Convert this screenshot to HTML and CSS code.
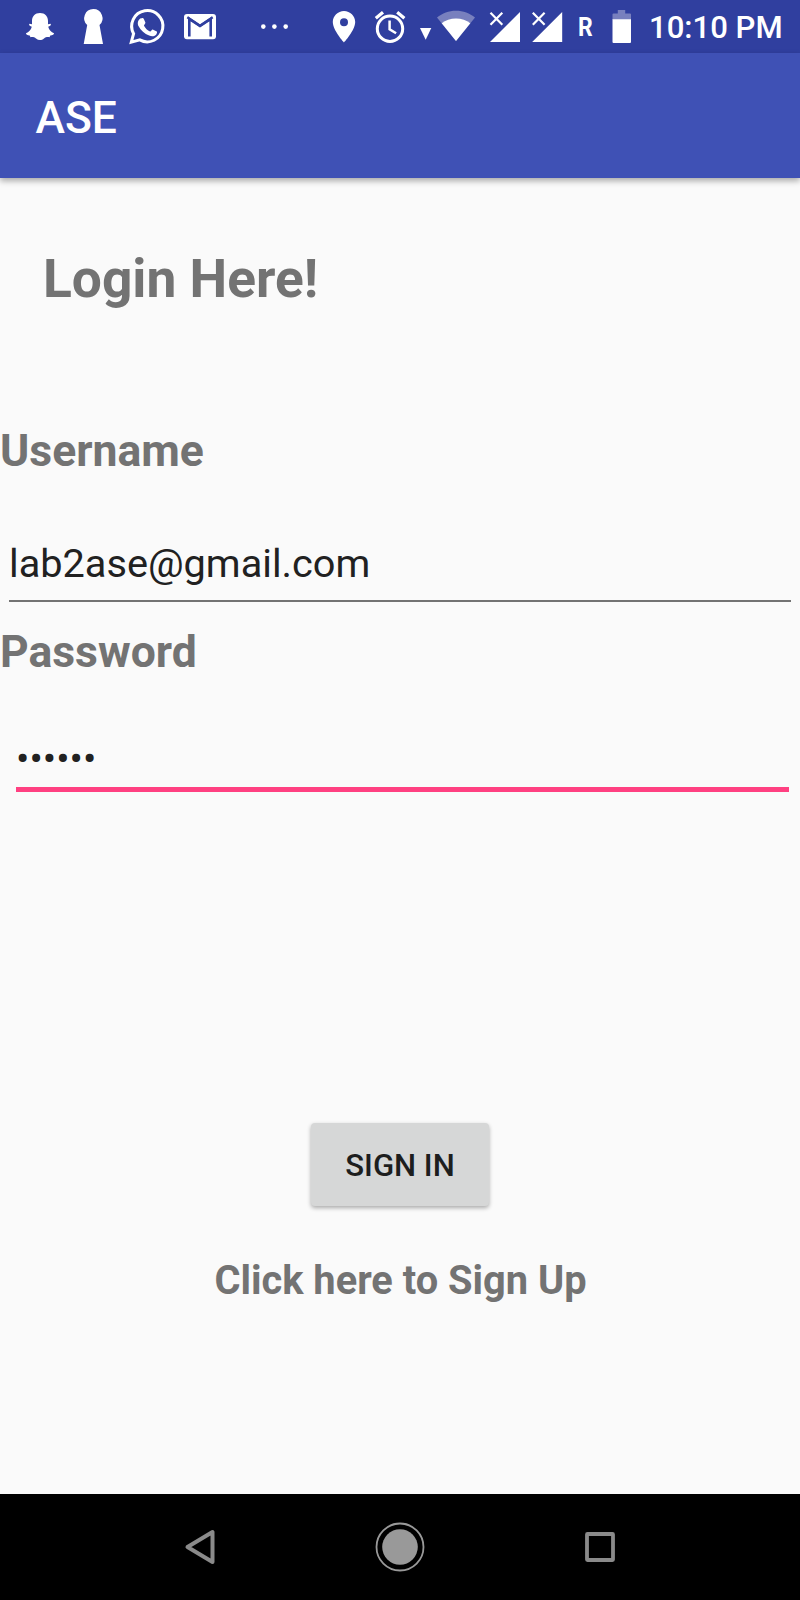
FILE: index.html
```
<!DOCTYPE html>
<html lang="en">
<head>
<meta charset="utf-8">
<title>ASE</title>
<link rel="stylesheet" href="styles.css">
</head>
<body>
<div class="screen">
  <div class="status">
    <svg width="50" height="53" viewBox="20 0 50 53"><path fill="#fff" d="M40 13c5 0 8 3.500 8 8v3.300l2.500-.6c1 .8.3 2-2.300 3 .8 3 3 5.500 5.800 6.500.3 1.300-1.500 2-3.700 2.300l-.8 1.700c-2-.3-4 0-5.500 1.200-2.500 2-5.500 2-8 0-1.500-1.200-3.500-1.500-5.500-1.200l-.8-1.700c-2.200-.3-4-1-3.700-2.300 2.800-1 5-3.500 5.800-6.500-2.600-1-3.300-2.200-2.300-3l2.500.6V21c0-4.500 3-8 8-8z"/></svg>
    <svg width="50" height="53" viewBox="70 0 50 53"><path fill="#fff" d="M93.300 9a9.200 9.200 0 0 1 6.200 16L103 44H83.700l3.500-19a9.200 9.200 0 0 1 6.100-16z"/></svg>
    <svg width="52" height="53" viewBox="120 0 52 53"><path fill="none" stroke="#fff" stroke-width="3" d="M131.300 42.200l2.300-8.500a15.600 15.600 0 1 1 6.200 6.200z"/><path fill="#fff" d="M141.500 18.300c.8-.5 1.800-.4 2.200.4l1.700 3.800c.3.800-1.600 2.600-1.400 3.200 1.400 2.700 3.400 4.500 6 5.700.8.300 2-2.100 2.700-1.900l4.100 2c.7.400-.1 2.600-1 3.500-1.700 1.500-4.200 1.500-6.700.6-4.500-1.700-8.300-5.200-10.500-9.300-1.600-3.200-.5-6.300 1.200-7.400-.1-.2 1.200-.4 1.700-.6z"/></svg>
    <svg width="64" height="53" viewBox="172 0 64 53"><rect x="184" y="14" width="32" height="25.300" rx="3" fill="#fff"/><path fill="none" stroke="#303f9f" stroke-width="2.600" d="M189.300 36.500V19l10.700 7 10.700-7v17.500"/><path fill="none" stroke="#303f9f" stroke-width="2.300" d="M187.300 17.200l12.700 8.600 12.700-8.600"/></svg>
    <svg width="76" height="53" viewBox="236 0 76 53"><g fill="#fff"><circle cx="263.300" cy="26.600" r="2.300"/><circle cx="274.400" cy="26.600" r="2.300"/><circle cx="285.700" cy="26.600" r="2.300"/></g></svg>
    <svg width="52" height="53" viewBox="312 0 52 53"><path fill="#fff" fill-rule="evenodd" d="M344 11c-6.200 0-11.200 5-11.200 11.100C332.800 30.400 344 42.500 344 42.500s11.200-12.100 11.200-20.400C355.200 16 350.200 11 344 11zm0 7.200a4 4 0 1 1 0 8 4 4 0 0 1 0-8z"/></svg>
    <svg width="48" height="53" viewBox="364 0 48 53"><g fill="none" stroke="#fff"><circle cx="390" cy="28.700" r="12.700" stroke-width="3"/><path stroke-width="2.500" d="M389.600 20.500v8.800l6.500 4"/><path stroke-width="3.200" d="M375.800 18.200l7.200-6M397.200 12.200l7.200 6"/></g></svg>
    <svg width="22" height="53" viewBox="412 0 22 53"><path fill="#fff" d="M420 28h11.300l-5.600 11.700z"/></svg>
    <svg width="48" height="53" viewBox="434 0 48 53"><path fill="#7880be" d="M456 41L437 17.600c5.200-4.400 11.800-6.800 19-6.800s13.800 2.400 19 6.800z"/><path fill="#fff" d="M456 41l-14.300-17.700c3.800-3.200 8.800-4.900 14.300-4.900s10.500 1.700 14.300 4.900z"/></svg>
    <svg width="44" height="53" viewBox="482 0 44 53"><path fill="#fff" d="M520 12v30h-30z"/><path fill="none" stroke="#fff" stroke-width="2.200" d="M490.500 12.800l11.800 12M502.300 12.800l-11.800 12"/></svg>
    <svg width="42" height="53" viewBox="526 0 42 53"><path fill="#fff" d="M562.200 12v30h-30z"/><path fill="none" stroke="#fff" stroke-width="2.200" d="M532.800 12.800l11.800 12M544.600 12.800l-11.800 12"/></svg>
    <span class="roaming"><span class="roaming-letter">R</span></span>
    <svg width="34" height="53" viewBox="606 0 34 53"><path fill="#7880be" d="M612.500 20v-5.500q0-1 1-1h4.300V10h7.400v3.500h4.800q1 0 1 1V20z"/><path fill="#fff" d="M612.500 19.300H631V42q0 1-1 1h-16.500q-1 0-1-1z"/></svg>
    <span class="clock">10:10 PM</span>
  </div>
  <header class="appbar">ASE</header>
  <main class="content">
    <h1 class="title">Login Here!</h1>
    <div class="label">Username</div>
    <div class="field email">lab2ase@gmail.com</div>
    <div class="label">Password</div>
    <div class="field password">••••••</div>
    <button class="signin">SIGN IN</button>
    <div class="signup">Click here to Sign Up</div>
  </main>
  <nav class="nav">
    <svg width="200" height="106" viewBox="0 0 200 106"><path fill="none" stroke="#8a8a8a" stroke-width="4" stroke-linejoin="round" d="M87.500 53l25-15v30z"/></svg>
    <svg width="200" height="106" viewBox="0 0 200 106"><circle cx="100" cy="53" r="17.800" fill="#999"/><circle cx="100" cy="53" r="23.500" fill="none" stroke="#999" stroke-width="1.800"/></svg>
    <svg width="200" height="106" viewBox="0 0 200 106"><rect x="87" y="40" width="26" height="26" rx=".5" fill="none" stroke="#8a8a8a" stroke-width="3.800" stroke-linejoin="round"/></svg>
  </nav>
</div>
</body>
</html>
```
FILE: styles.css
```
body {
  margin: 0;
  font-family: Roboto, "Liberation Sans", sans-serif;
}

.screen {
  display: flex;
  flex-direction: column;
  width: 800px;
  height: 1600px;
  background: #fafafa;
  overflow: hidden;
}

.status {
  display: flex;
  flex: none;
  box-sizing: border-box;
  height: 53px;
  padding-left: 20px;
  background: #303f9f;
  color: #fff;
  line-height: 53px;
  white-space: nowrap;
}

.status svg {
  flex: none;
}

.roaming {
  flex: none;
  box-sizing: border-box;
  width: 38px;
  padding: 1px 0 0 9.500px;
  font-size: 26.700px;
  font-weight: 700;
  line-height: 52px;
}

.roaming-letter {
  display: inline-block;
  transform: scaleX(.86);
  transform-origin: left;
}

.clock {
  padding: 2px 0 0 9px;
  font-size: 31.100px;
  font-weight: 500;
  line-height: 51px;
}

.appbar {
  flex: none;
  box-sizing: border-box;
  height: 125px;
  padding: 4px 0 0 35.500px;
  background: #3f51b5;
  box-shadow: 0 3px 6px rgba(0, 0, 0, .32);
  color: #fff;
  font-size: 44.400px;
  font-weight: 500;
  line-height: 122px;
}

.content {
  display: flex;
  flex: 1;
  flex-direction: column;
  color: #737373;
  font-weight: 700;
}

.title {
  margin: 70px 0 115px 43px;
  font-size: 53.300px;
  line-height: 62px;
}

.label {
  font-size: 44.500px;
  line-height: 52px;
}

.field {
  color: #212121;
  font-size: 39.700px;
  font-weight: 400;
  line-height: 46px;
}

.email {
  margin: 64px 9px 24px;
  padding-bottom: 13px;
  border-bottom: 2px solid #737373;
}

.password {
  margin: 58px 11px 0 16px;
  padding-bottom: 5px;
  border-bottom: 5px solid #ff4081;
}

.signin {
  align-self: center;
  width: 178px;
  height: 83px;
  margin: 331px 0 52px;
  padding: 1px 0 0;
  border: 0;
  border-radius: 4px;
  background: #d6d7d7;
  box-shadow: 0 2px 4px rgba(0, 0, 0, .32);
  color: #1d1e1e;
  font: 500 31.100px Roboto, "Liberation Sans", sans-serif;
}

.signup {
  padding-left: 1px;
  font-size: 39.800px;
  line-height: 46px;
  text-align: center;
}

.nav {
  display: flex;
  flex: none;
  justify-content: center;
  height: 106.500px;
  background: #000;
}
```
